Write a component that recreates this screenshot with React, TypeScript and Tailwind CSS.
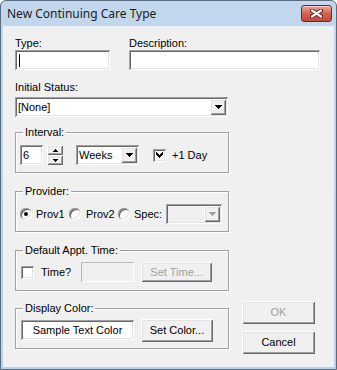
import type { ReactNode } from 'react';

// classic win32 3D edges
const SUNKEN = 'shadow-[inset_1px_1px_#a0a0a0,inset_-1px_-1px_#ffffff,inset_2px_2px_#696969,inset_-2px_-2px_#e3e3e3]';
const RAISED = 'shadow-[inset_1px_1px_#ffffff,inset_-1px_-1px_#696969,inset_2px_2px_#e3e3e3,inset_-2px_-2px_#a0a0a0]';
const FLAT_SUNKEN = 'shadow-[inset_1px_1px_#b9b9b9,inset_-1px_-1px_#ffffff]';

const DownArrow = ({ color = '#000' }: { color?: string }) => (
  <svg width="7" height="4" viewBox="0 0 7 4" shapeRendering="crispEdges">
    <path d="M0 0h7v1H0zM1 1h5v1H1zM2 2h3v1H2zM3 3h1v1H3z" fill={color} />
  </svg>
);

const DropButton = ({ disabled }: { disabled?: boolean }) => (
  <div className={`flex h-[16px] w-[16px] shrink-0 items-center justify-center bg-[#f0f0f0] ${RAISED}`}>
    <DownArrow color={disabled ? '#a0a0a0' : '#000'} />
  </div>
);

const Combo = ({ text, className, disabled }: { text?: string; className: string; disabled?: boolean }) => (
  <div
    className={`flex items-center justify-between pl-[3px] pr-[2px] ${disabled ? 'bg-[#f0f0f0]' : 'bg-white'} ${SUNKEN} ${className}`}
  >
    <span>{text}</span>
    <DropButton disabled={disabled} />
  </div>
);

const Radio = ({ checked }: { checked?: boolean }) => (
  <div className={`flex h-[12px] w-[12px] shrink-0 items-center justify-center rounded-full bg-white ${SUNKEN}`}>
    {checked && <div className="h-[4px] w-[4px] rounded-full bg-black" />}
  </div>
);

const Check = ({ checked }: { checked?: boolean }) => (
  <div className={`flex h-[13px] w-[13px] shrink-0 items-center justify-center bg-white ${SUNKEN}`}>
    {checked && (
      <svg width="7" height="7" viewBox="0 0 7 7" shapeRendering="crispEdges">
        <path d="M6 0h1v3H6zM5 1h1v3H5zM4 2h1v3H4zM3 3h1v3H3zM2 2h1v3H2zM1 1h1v3H1zM0 0h1v3H0z" fill="#000" />
      </svg>
    )}
  </div>
);

const Button = ({ label, className, disabled }: { label: string; className: string; disabled?: boolean }) => (
  <div
    className={`flex items-center justify-center bg-[#f0f0f0] ${RAISED} ${disabled ? 'text-[#a0a0a0]' : 'text-black'} ${className}`}
  >
    {label}
  </div>
);

const Group = ({ title, children, className }: { title: string; children: ReactNode; className: string }) => (
  <div className={`relative h-[41px] w-[214px] border border-[#a0a0a0] shadow-[inset_1px_1px_#ffffff,1px_1px_#ffffff] ${className}`}>
    <span className="absolute -top-[7px] left-[7px] bg-[#f0f0f0] px-[2px] leading-[13px]">{title}</span>
    {children}
  </div>
);

export default function App() {
  return (
    <div className="flex h-[370px] w-[337px] flex-col rounded-t-[6px] border border-[#5a6c80] bg-gradient-to-b from-[#c2d6ee] to-[#bcd1ea] font-['Liberation_Sans',Arial,sans-serif] text-[11px] leading-[13px] text-black">
      {/* title bar */}
      <div className="flex h-[25px] shrink-0 items-center justify-between pl-[6px] pr-[4px]">
        <span className="font-['Noto_Sans',sans-serif] text-[12px] text-[#1b1b1b]">New Continuing Care Type</span>
        <div className="flex h-[17px] w-[31px] items-center justify-center rounded-[3px] border border-[#6b2a26] bg-gradient-to-b from-[#e9aaa0] via-[#d0624f] to-[#c44a36] shadow-[inset_0_1px_#f3c8c0]">
          <svg width="13" height="9" viewBox="0 0 13 9">
            <path d="M2 1.5L11 7.5M11 1.5L2 7.5" stroke="#4a1c18" strokeWidth="4" strokeLinecap="round" />
            <path d="M2 1.5L11 7.5M11 1.5L2 7.5" stroke="#ffffff" strokeWidth="2.2" strokeLinecap="round" />
          </svg>
        </div>
      </div>

      {/* client area */}
      <div className="mx-[2px] mb-[2px] flex flex-1 flex-col bg-[#f0f0f0] pl-[12px] pt-[11px]">
        <div className="flex">
          <div className="flex w-[95px] flex-col">
            <span>Type:</span>
            <div className={`flex h-[20px] items-center bg-white pl-[4px] ${SUNKEN}`}>
              <div className="h-[13px] w-[1px] bg-black" />
            </div>
          </div>
          <div className="ml-[19px] flex w-[191px] flex-col">
            <span>Description:</span>
            <div className={`h-[20px] bg-white ${SUNKEN}`} />
          </div>
        </div>

        <span className="mt-[11px]">Initial Status:</span>
        <Combo text="[None]" className="mt-[3px] h-[20px] w-[213px]" />

        <Group title="Interval:" className="mt-[15px]">
          <div className="mt-[12px] flex h-[20px] items-center pl-[4px]">
            <div className={`flex h-[20px] w-[23px] items-center bg-white pl-[3px] ${SUNKEN}`}>6</div>
            <div className="ml-[4px] flex h-[20px] w-[16px] flex-col">
              <div className={`flex h-[10px] items-center justify-center bg-[#f0f0f0] ${RAISED}`}>
                <svg width="5" height="3" viewBox="0 0 5 3" shapeRendering="crispEdges">
                  <path d="M2 0h1v1H2zM1 1h3v1H1zM0 2h5v1H0z" fill="#000" />
                </svg>
              </div>
              <div className={`flex h-[10px] items-center justify-center bg-[#f0f0f0] ${RAISED}`}>
                <svg width="5" height="3" viewBox="0 0 5 3" shapeRendering="crispEdges">
                  <path d="M0 0h5v1H0zM1 1h3v1H1zM2 2h1v1H2z" fill="#000" />
                </svg>
              </div>
            </div>
            <Combo text="Weeks" className="ml-[13px] h-[20px] w-[63px]" />
            <div className="ml-[14px]">
              <Check checked />
            </div>
            <span className="ml-[6px]">+1 Day</span>
          </div>
        </Group>

        <Group title="Provider:" className="mt-[18px]">
          <div className="mt-[12px] flex h-[20px] items-center pl-[4px]">
            <div className="flex w-[49px] items-center">
              <Radio checked />
              <span className="ml-[4px]">Prov1</span>
            </div>
            <div className="flex w-[49px] items-center">
              <Radio />
              <span className="ml-[5px]">Prov2</span>
            </div>
            <Radio />
            <span className="ml-[4px]">Spec:</span>
            <Combo className="ml-[4px] h-[20px] w-[56px]" disabled />
          </div>
        </Group>

        <Group title="Default Appt. Time:" className="mt-[18px]">
          <div className="mt-[11px] flex h-[20px] items-center pl-[5px]">
            <Check />
            <span className="ml-[7px]">Time?</span>
            <div className={`ml-[10px] h-[20px] w-[53px] bg-[#f0f0f0] ${FLAT_SUNKEN}`} />
            <Button label="Set Time..." className="ml-[7px] h-[20px] w-[71px]" disabled />
          </div>
        </Group>

        <div className="mt-[10px] flex items-start">
          <Group title="Display Color:" className="mt-[7px]">
            <div className="mt-[11px] flex h-[20px] items-center pl-[5px]">
              <div className={`flex h-[20px] w-[113px] items-center justify-center bg-white ${SUNKEN}`}>
                Sample Text Color
              </div>
              <Button label="Set Color..." className="ml-[7px] h-[23px] w-[72px]" />
            </div>
          </Group>
          <div className="ml-[13px] flex flex-col">
            <Button label="OK" className="h-[23px] w-[73px]" disabled />
            <Button label="Cancel" className="mt-[7px] h-[23px] w-[73px]" />
          </div>
        </div>
      </div>
    </div>
  );
}
